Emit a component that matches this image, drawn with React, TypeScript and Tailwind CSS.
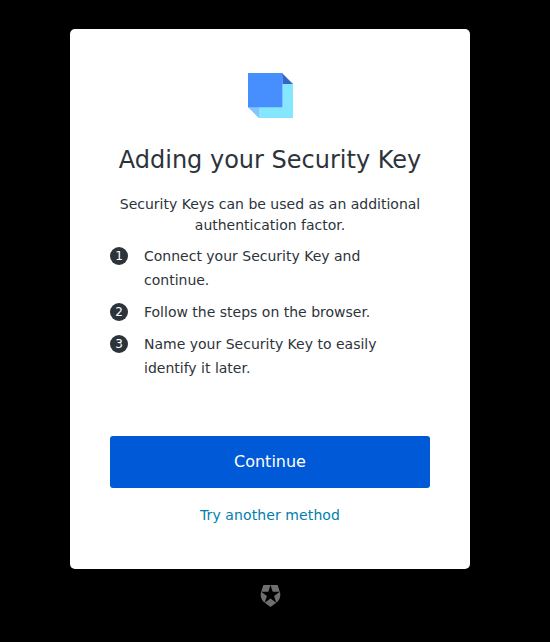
const steps = [
  "Connect your Security Key and continue.",
  "Follow the steps on the browser.",
  "Name your Security Key to easily identify it later.",
];

function Logo() {
  return (
    <svg width="45" height="45" viewBox="0 0 45 45" className="block">
      <path fill="#85e6ff" d="M34.500 10.500H45V45H11L0 34h34.500z" />
      <path fill="#3168c5" d="M34 0l11 11H34.500z" />
      <path fill="#85c4ff" d="M0 34h11v11z" />
      <path fill="#478eff" d="M0 0h34.500v34.200H0z" />
    </svg>
  );
}

function Shield() {
  return (
    <svg width="21" height="22" viewBox="-4.600 0 160 168" className="block">
      <path
        fill="#6f6f6f"
        d="M119.600 135.900L102.700 84l44.100-32.100H92.300L75.400 0H130l16.800 51.900c9.800 30.100-.3 64.800-27.200 84zM31.300 135.900L75.400 168l44.200-32.100-44.200-32.100zM4 51.900C-6.300 83.700 6.100 117.700 31.300 135.900L48.100 84 4 51.900h54.600L75.400 0H20.900z"
      />
    </svg>
  );
}

export default function App() {
  return (
    <div className="flex h-[642px] w-[550px] flex-col items-center bg-black pr-[10px] pt-[29px] font-['DejaVu_Sans',sans-serif] text-[#2d333a]">
      <main className="flex h-[540px] w-[400px] shrink-0 flex-col items-center rounded-[5px] bg-white px-10 pt-11">
        <Logo />
        <h1 className="mt-6 whitespace-nowrap text-2xl leading-[36px]">Adding your Security Key</h1>
        <p className="mt-4 text-center text-sm leading-[21px]">
          Security Keys can be used as an additional authentication factor.
        </p>
        <ol className="mt-2 flex w-full flex-col gap-2">
          {steps.map((step, i) => (
            <li key={step} className="flex gap-4 text-sm leading-6">
              <span className="mt-[3px] flex size-[18px] shrink-0 items-center justify-center rounded-full bg-[#2d333a] text-xs leading-none text-white">
                {i + 1}
              </span>
              <span className="w-[246px]">{step}</span>
            </li>
          ))}
        </ol>
        <button className="mt-14 h-[52px] w-full shrink-0 rounded-[3px] bg-[#0059d6] text-base text-white">Continue</button>
        <a href="#" className="mt-[17px] text-sm leading-[21px] tracking-[0.1px] text-[#007ead]">Try another method</a>
      </main>
      <div className="mt-4"><Shield /></div>
    </div>
  );
}
